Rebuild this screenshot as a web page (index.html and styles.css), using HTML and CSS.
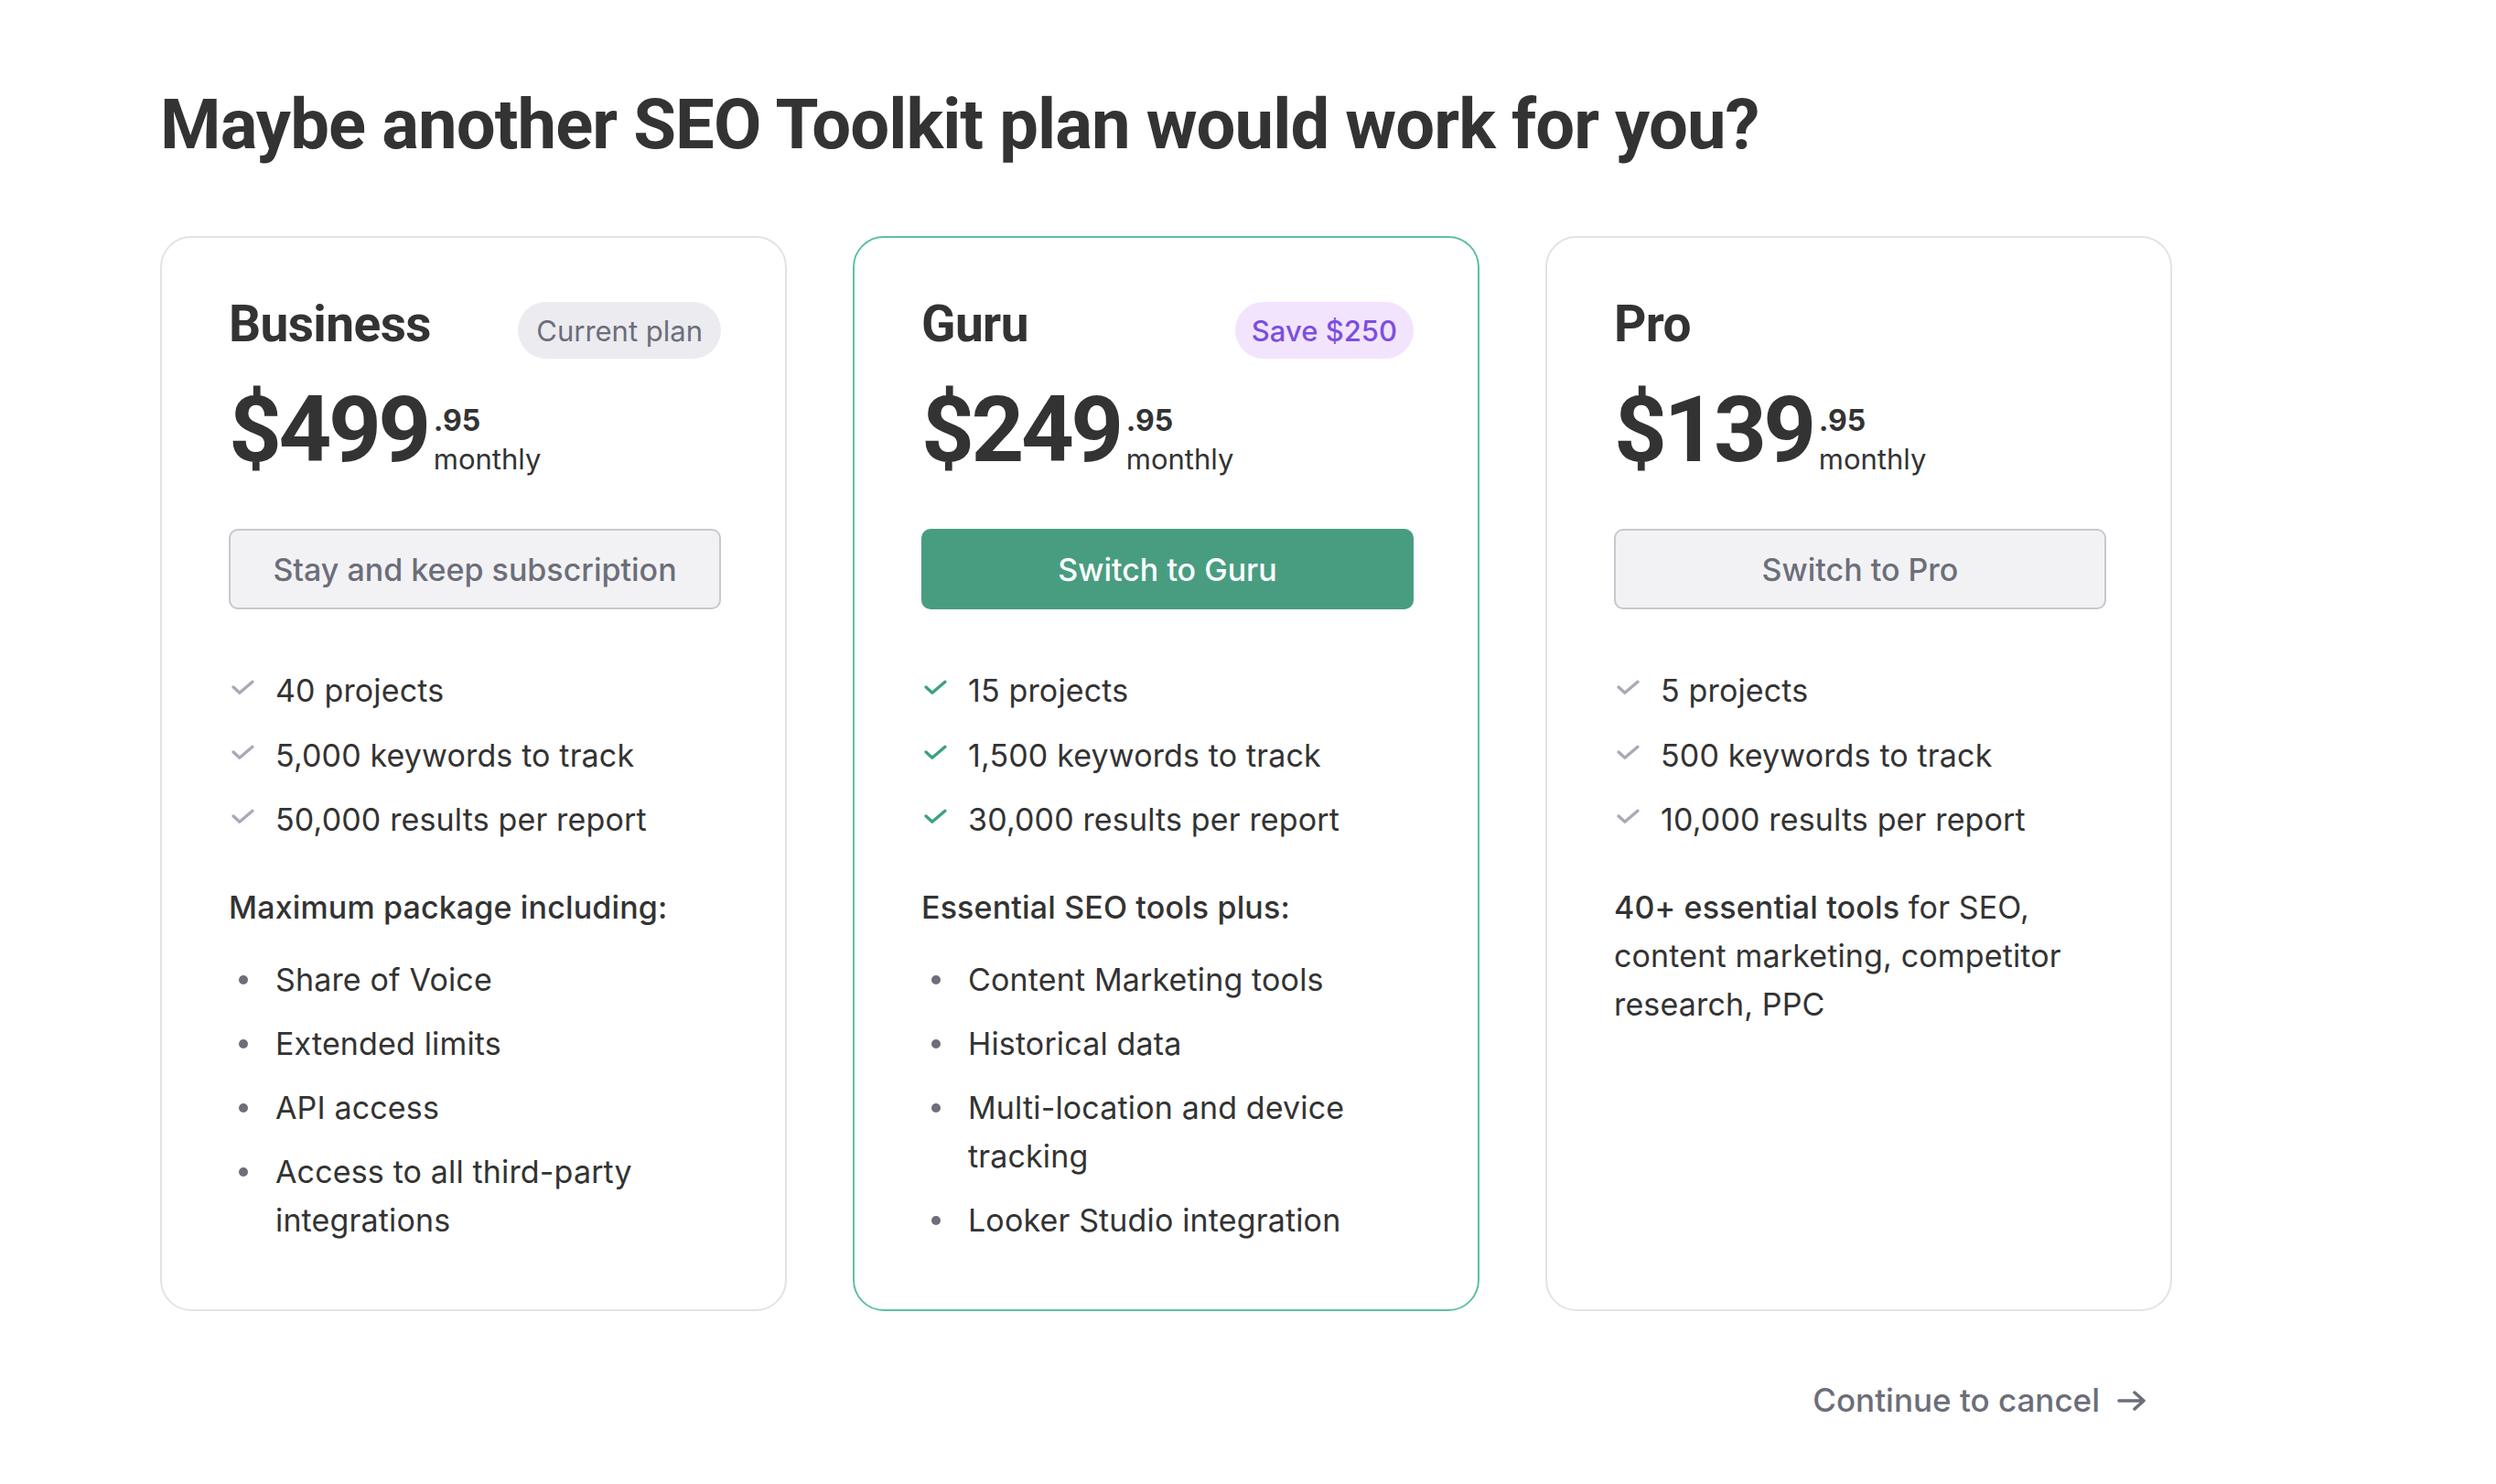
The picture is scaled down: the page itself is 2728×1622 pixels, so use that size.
FILE: index.html
```html
<!DOCTYPE html>
<html lang="en">
<head>
<meta charset="utf-8">
<title>SEO Toolkit plans</title>
<link rel="stylesheet" href="styles.css">
</head>
<body>
<main class="page">
  <h1 class="title">Maybe another SEO Toolkit plan would work for you?</h1>

  <div class="plans">
    <section class="card">
      <div class="card-head">
        <h2 class="plan-name">Business</h2>
        <span class="badge badge-current">Current plan</span>
      </div>
      <div class="price">
        <span class="price-main">$499</span>
        <span class="price-side">
          <span class="price-cents">.95</span>
          <span class="price-period">monthly</span>
        </span>
      </div>
      <button class="btn btn-secondary">Stay and keep subscription</button>
      <ul class="checks">
        <li><svg class="check" viewBox="0 0 24 16"><path d="M2 7.5 L8.5 13.5 L22 2"/></svg>40 projects</li>
        <li><svg class="check" viewBox="0 0 24 16"><path d="M2 7.5 L8.5 13.5 L22 2"/></svg>5,000 keywords to track</li>
        <li><svg class="check" viewBox="0 0 24 16"><path d="M2 7.5 L8.5 13.5 L22 2"/></svg>50,000 results per report</li>
      </ul>
      <p class="subhead">Maximum package including:</p>
      <ul class="bullets">
        <li>Share of Voice</li>
        <li>Extended limits</li>
        <li>API access</li>
        <li>Access to all third-party integrations</li>
      </ul>
    </section>

    <section class="card card-featured">
      <div class="card-head">
        <h2 class="plan-name">Guru</h2>
        <span class="badge badge-save">Save $250</span>
      </div>
      <div class="price">
        <span class="price-main">$249</span>
        <span class="price-side">
          <span class="price-cents">.95</span>
          <span class="price-period">monthly</span>
        </span>
      </div>
      <button class="btn btn-primary">Switch to Guru</button>
      <ul class="checks checks-green">
        <li><svg class="check" viewBox="0 0 24 16"><path d="M2 7.5 L8.5 13.5 L22 2"/></svg>15 projects</li>
        <li><svg class="check" viewBox="0 0 24 16"><path d="M2 7.5 L8.5 13.5 L22 2"/></svg>1,500 keywords to track</li>
        <li><svg class="check" viewBox="0 0 24 16"><path d="M2 7.5 L8.5 13.5 L22 2"/></svg>30,000 results per report</li>
      </ul>
      <p class="subhead">Essential SEO tools plus:</p>
      <ul class="bullets">
        <li>Content Marketing tools</li>
        <li>Historical data</li>
        <li>Multi-location and device tracking</li>
        <li>Looker Studio integration</li>
      </ul>
    </section>

    <section class="card">
      <div class="card-head">
        <h2 class="plan-name">Pro</h2>
      </div>
      <div class="price">
        <span class="price-main">$139</span>
        <span class="price-side">
          <span class="price-cents">.95</span>
          <span class="price-period">monthly</span>
        </span>
      </div>
      <button class="btn btn-secondary">Switch to Pro</button>
      <ul class="checks">
        <li><svg class="check" viewBox="0 0 24 16"><path d="M2 7.5 L8.5 13.5 L22 2"/></svg>5 projects</li>
        <li><svg class="check" viewBox="0 0 24 16"><path d="M2 7.5 L8.5 13.5 L22 2"/></svg>500 keywords to track</li>
        <li><svg class="check" viewBox="0 0 24 16"><path d="M2 7.5 L8.5 13.5 L22 2"/></svg>10,000 results per report</li>
      </ul>
      <p class="desc"><strong>40+ essential tools</strong> for SEO, content marketing, competitor research, PPC</p>
    </section>
  </div>

  <div class="footer">
    <a class="cancel-link" href="#">Continue to cancel
      <svg class="arrow" viewBox="0 0 32 22"><path d="M2 11 H29 M19 2 L29 11 L19 20"/></svg>
    </a>
  </div>
</main>
</body>
</html>
```
FILE: styles.css
```css
* { box-sizing: border-box; }

html, body {
  margin: 0;
  padding: 0;
  background: #ffffff;
}

body {
  font-family: Inter, "Noto Sans", "Liberation Sans", sans-serif;
  color: #333333;
}

.page {
  width: 2206px;
  margin-left: 175px;
  padding-top: 91px;
}

.title {
  margin: 0;
  font-family: Roboto, Inter, "Liberation Sans", sans-serif;
  font-size: 76px;
  line-height: 91px;
  font-weight: 700;
  letter-spacing: -0.9px;
  color: #333333;
}

.plans {
  margin-top: 76px;
  display: grid;
  grid-template-columns: repeat(3, 685px);
  column-gap: 72px;
}

.card {
  border: 2px solid #e2e2e9;
  border-radius: 34px;
  padding: 70px 70px 71px 73px;
  display: flex;
  flex-direction: column;
}

.card-featured {
  border-color: #5cc29c;
}

.card-head {
  display: flex;
  justify-content: space-between;
  align-items: flex-start;
  height: 62px;
}

.plan-name {
  margin: 0;
  font-family: Roboto, Inter, "Liberation Sans", sans-serif;
  font-size: 55px;
  line-height: 48px;
  font-weight: 700;
  letter-spacing: -0.6px;
  color: #333333;
}

.badge {
  height: 62px;
  padding: 0 18px;
  border-radius: 31px;
  display: inline-flex;
  align-items: center;
  font-size: 31px;
  font-weight: 500;
}

.badge-current {
  background: #ebebf0;
  color: #6c6e79;
  font-weight: 400;
  padding: 0 20px;
}

.badge-save {
  background: #f3e4fe;
  color: #7c4ee0;
}

.price {
  margin-top: 28px;
  display: flex;
  align-items: flex-end;
  gap: 6px;
  height: 100px;
}

.price-main {
  font-family: Roboto, Inter, "Liberation Sans", sans-serif;
  font-size: 101px;
  line-height: 100px;
  font-weight: 700;
  letter-spacing: -3.5px;
  color: #333333;
}

.price-side {
  display: flex;
  flex-direction: column;
}

.price-cents {
  font-size: 32px;
  line-height: 32px;
  font-weight: 700;
  margin-bottom: 8px;
}

.price-period {
  font-size: 31px;
  line-height: 36px;
  font-weight: 400;
}

.btn {
  margin-top: 58px;
  height: 88px;
  width: 100%;
  border-radius: 10px;
  font-family: inherit;
  font-size: 34px;
  font-weight: 500;
  cursor: pointer;
}

.btn-secondary {
  background: #f2f2f5;
  border: 2px solid #c6c8d0;
  color: #6c6e79;
}

.btn-primary {
  background: #489d81;
  border: 2px solid #489d81;
  color: #ffffff;
}

.checks, .bullets {
  list-style: none;
  margin: 0;
  padding: 0;
  display: flex;
  flex-direction: column;
  gap: 17.5px;
  font-size: 34px;
  line-height: 53px;
  letter-spacing: 0.15px;
}

.bullets {
  gap: 17px;
}

.checks {
  margin-top: 62px;
}

.checks li, .bullets li {
  position: relative;
  padding-left: 51px;
}

.check {
  position: absolute;
  left: 3px;
  top: 15px;
  width: 25px;
  height: 17px;
  fill: none;
  stroke: #a8aab5;
  stroke-width: 3.2;
  stroke-linecap: round;
  stroke-linejoin: round;
}

.checks-green .check {
  stroke: #3ca27c;
}

.bullets li::before {
  content: "";
  position: absolute;
  left: 11px;
  top: 22px;
  width: 10px;
  height: 10px;
  border-radius: 50%;
  background: #6c6e79;
}

.subhead {
  margin: 43px 0 26px;
  font-size: 34px;
  line-height: 53px;
  font-weight: 500;
  letter-spacing: 0.15px;
}

.desc {
  margin: 43px 0 0;
  font-size: 34px;
  line-height: 53px;
  font-weight: 400;
  letter-spacing: 0.15px;
}

.desc strong {
  font-weight: 500;
}

.footer {
  display: flex;
  justify-content: flex-end;
  margin-top: 71px;
  padding-right: 35px;
}

.cancel-link {
  display: inline-flex;
  align-items: center;
  gap: 19px;
  font-size: 35px;
  line-height: 53px;
  font-weight: 500;
  color: #6c6e79;
  text-decoration: none;
}

.arrow {
  width: 32px;
  height: 22px;
  fill: none;
  stroke: #6c6e79;
  stroke-width: 3.5;
  stroke-linecap: round;
  stroke-linejoin: round;
}
```
